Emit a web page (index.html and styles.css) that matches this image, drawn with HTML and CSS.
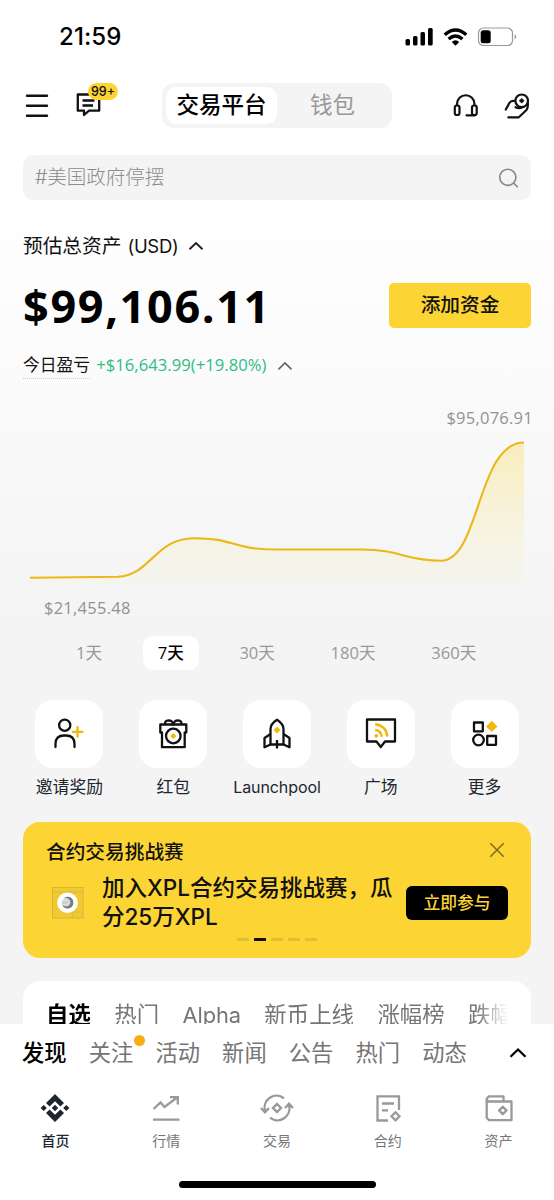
FILE: index.html
```html
<!DOCTYPE html>
<html lang="zh-CN">
<head>
<meta charset="utf-8">
<title>首页</title>
<link rel="stylesheet" href="styles.css">
</head>
<body>
<div class="phone">
  <main class="content">
    <div class="status">
      <span class="time">21:59</span>
      <svg class="status-icons" width="114" height="22" viewBox="404 26 114 22">
        <g fill="#000"><rect x="405.500" y="39" width="4.500" height="6.500" rx="1.500"/><rect x="413" y="36" width="4.500" height="9.500" rx="1.500"/><rect x="420.500" y="32" width="4.500" height="13.500" rx="1.500"/><rect x="428" y="28" width="4.700" height="17.500" rx="1.500"/></g>
        <g fill="none" stroke="#000" stroke-width="3.300"><path d="M444.700 34.800Q455.500 25.300 466.300 34.800"/><path d="M448.600 39Q455.500 33 462.400 39"/></g>
        <path d="M451.800 42Q455.500 38.600 459.200 42L455.500 45.700Z"/>
        <rect x="478.500" y="28" width="34" height="17.500" rx="5" fill="none" stroke="#999" stroke-width="1.200"/>
        <rect x="480.700" y="30.200" width="10" height="13" rx="2.500"/>
        <path d="M514.600 34.200q3.400 2.700 0 5.400z" fill="#999"/>
      </svg>
    </div>

    <header class="header">
      <svg class="menu-icon" width="24" height="26" viewBox="25 92.500 24 26"><path d="M27 95.300H47M27 105.300H47M27 115.300H47" stroke="#111" stroke-width="2.400" stroke-linecap="round"/></svg>
      <div class="messages">
        <svg width="28" height="28" viewBox="73.500 92 28 28" fill="none" stroke="#111" stroke-width="2.300" stroke-linejoin="round"><path d="M77.300 94.500H98.700V110.700H88.500L83.500 115V110.700H77.300Z"/><path d="M82 100.500H94M82 105.500H92.500"/></svg>
        <span class="badge">99+</span>
      </div>
      <div class="switch"><span class="switch-on">交易平台</span><span class="switch-off">钱包</span></div>
      <svg class="headset" width="28" height="28" viewBox="452 91.500 28 28" fill="none" stroke="#111" stroke-width="2.200" stroke-linejoin="round"><path d="M457 105V103.500A8.700 8.700 0 0 1 474.500 103.500V105"/><rect x="454.800" y="105" width="4.700" height="9.500" rx="2"/><rect x="472" y="105" width="4.700" height="9.500" rx="2"/><path d="M475 114.800H466.500" stroke-linecap="round"/></svg>
      <svg class="hand" width="30" height="30" viewBox="502 90.500 30 30" fill="none" stroke="#111" stroke-width="2.200" stroke-linecap="round" stroke-linejoin="round"><circle cx="521.700" cy="100.300" r="6.300"/><path d="M505.800 109L509.500 102.300Q510.700 100.300 513 100.300H514.500M508.300 116.800H518.800L526.500 109.500Q528.300 107.500 527.800 102M515.500 106.700Q519.500 108.500 522.500 106.500"/><path d="M521.700 97.500l2.800 2.800-2.800 2.800-2.800-2.800z" fill="#111" stroke="none"/></svg>
    </header>

    <div class="search">
      <span>#美国政府停摆</span>
      <svg width="24" height="24" viewBox="496 165.500 24 24" fill="none" stroke="#888" stroke-width="1.600"><circle cx="507.800" cy="176.800" r="8.100"/><path d="M513.500 182.500L517.800 186.800"/></svg>
    </div>

    <section class="assets">
      <div class="asset-label"><span>预估总资产</span><span class="usd">(USD)</span><svg width="16" height="10" viewBox="0 0 16 10" fill="none" stroke="#222" stroke-width="1.900"><path d="M1.500 8.300L8 2L14.500 8.300"/></svg></div>
      <div class="balance-row"><span class="balance">$99,106.11</span><button class="add">添加资金</button></div>
      <div class="pnl"><span class="pnl-label">今日盈亏</span><span class="gain">+$16,643.99(+19.80%)</span><svg width="16" height="10" viewBox="0 0 16 10" fill="none" stroke="#666" stroke-width="1.700"><path d="M1.500 8.300L8 2L14.500 8.300"/></svg></div>
    </section>

    <section class="chart">
      <div class="high">$95,076.91</div>
      <svg width="554" height="166" viewBox="0 430 554 166">
        <defs><linearGradient id="area" x1="0" y1="442" x2="0" y2="586" gradientUnits="userSpaceOnUse"><stop offset="0" stop-color="#f8cf32" stop-opacity=".3"/><stop offset="1" stop-color="#f8e85a" stop-opacity=".03"/></linearGradient></defs>
        <path d="M30 577.700L118 576.700C151 575 155 538.200 194 538.200C236 538.200 230 549.500 277 549.500H362C400 549.500 405 560.700 441 560.700C480 560.700 477 442.500 524 442.500V586H30Z" fill="url(#area)"/>
        <path d="M30 577.700L118 576.700C151 575 155 538.200 194 538.200C236 538.200 230 549.500 277 549.500H362C400 549.500 405 560.700 441 560.700C480 560.700 477 442.500 524 442.500" fill="none" stroke="#ecb719" stroke-width="2.100"/>
      </svg>
      <div class="low">$21,455.48</div>
      <div class="ranges"><span>1天</span><span class="current">7天</span><span>30天</span><span>180天</span><span>360天</span></div>
    </section>

    <section class="shortcuts">
      <div class="shortcut"><div class="tile"><svg width="36" height="36" viewBox="52 716 36 36" fill="none" stroke="#111" stroke-width="2.300" stroke-linecap="round"><circle cx="65.700" cy="725.200" r="5.600"/><path d="M56.500 747V744Q56.500 735.500 65 735.500H67Q75.500 735.500 75.500 744V747"/><path d="M73.800 731.800H83.500M78.500 727V736.700" stroke="#f0b90b"/></svg></div><span>邀请奖励</span></div>
      <div class="shortcut"><div class="tile"><svg width="36" height="36" viewBox="155 716 36 36" fill="none" stroke="#111" stroke-width="2.300" stroke-linejoin="round"><path d="M160.300 724.500H186.300V732.500H184.700V747.200H162V732.500H160.300Z"/><path d="M165 724.500Q164.500 720.500 168.500 720.300Q172.500 720.300 173.300 724.500Q174.100 720.300 178 720.300Q182 720.500 181.500 724.500"/><circle cx="173.300" cy="736" r="7.300"/><path d="M173.300 733l3 3-3 3-3-3z" fill="#f0b90b" stroke="none"/></svg></div><span>红包</span></div>
      <div class="shortcut"><div class="tile"><svg width="36" height="36" viewBox="259 716 36 36" fill="none" stroke="#111" stroke-width="2.300" stroke-linejoin="round"><path d="M270.500 744.500V729Q270.500 724 277 719.700Q283.500 724 283.500 729V744.500Z"/><path d="M270.500 734L264.500 738V747.300L270.500 744.500M283.500 734L289.500 738V747.300L283.500 744.500M277 740V748.500"/><path d="M277 726.500l3.500 3.500-3.500 3.500-3.500-3.500z" fill="#f0b90b" stroke="none"/></svg></div><span class="latin">Launchpool</span></div>
      <div class="shortcut"><div class="tile"><svg width="36" height="36" viewBox="363 716 36 36" fill="none" stroke="#111" stroke-width="2.300" stroke-linejoin="round"><path d="M367 719.500H395V741.500H385L380.800 747L376.500 741.500H367Z"/><g stroke="#f0b90b" stroke-width="2.400"><path d="M375.200 724.300Q386.500 725.800 387.300 736.700M375.200 730Q381 730.700 381.900 736.700"/></g><circle cx="376.300" cy="735.800" r="1.900" fill="#f0b90b" stroke="none"/></svg></div><span>广场</span></div>
      <div class="shortcut"><div class="tile"><svg width="36" height="36" viewBox="466.500 716 36 36" fill="none" stroke="#111" stroke-width="2.300" stroke-linejoin="round"><rect x="473.500" y="722.500" width="8.800" height="8.800"/><circle cx="478" cy="740" r="5.300"/><rect x="486.700" y="736" width="8.800" height="8.800"/><path d="M491.300 720.700l5.700 5.700-5.700 5.700-5.700-5.700z" fill="#f0b90b" stroke="none"/></svg></div><span>更多</span></div>
    </section>

    <section class="banner">
      <div class="banner-head"><span>合约交易挑战赛</span><svg width="16" height="16" viewBox="0 0 16 16"><path d="M1.300 1.300L14.700 14.700M14.700 1.300L1.300 14.700" stroke="#80691b" stroke-width="1.500"/></svg></div>
      <div class="banner-main">
        <svg class="coin" width="32" height="32" viewBox="0 0 32 32"><rect x=".5" y=".5" width="30.500" height="30.500" fill="#efca36" stroke="#d9b62e"/><path d="M1 5H31M20.500 22V31M20.500 25H31" stroke="#dcb82d" stroke-width=".8"/><circle cx="15.500" cy="15.700" r="10.300" fill="#fff"/><circle cx="15.500" cy="15.700" r="5.700" fill="#ccd1d2"/><path d="M12 10.900A5.900 5.900 0 1 1 10.300 18.300Q14 20.500 17 18.500Q20 15.500 17 12Q15 10.300 12 10.900Z" fill="#747c82"/><path d="M10.500 13.500Q16 12 17 15.500Q16 19 11.500 17.500" stroke="#fff" fill="none" stroke-dasharray="1 .7"/></svg>
        <p>加入XPL合约交易挑战赛，瓜<br>分25万XPL</p>
        <button class="join">立即参与</button>
      </div>
      <div class="pager"><i></i><i class="active"></i><i></i><i></i><i></i></div>
    </section>

    <section class="market"><div class="market-tabs"><b>自选</b><span>热门</span><span class="alpha">Alpha</span><span>新币上线</span><span>涨幅榜</span><span>跌幅榜</span></div></section>
  </main>

  <footer class="dock">
    <div class="feed"><b>发现</b><span class="notice">关注</span><span>活动</span><span>新闻</span><span>公告</span><span>热门</span><span>动态</span><svg width="18" height="12" viewBox="0 0 18 12" fill="none" stroke="#000" stroke-width="2.300"><path d="M1.500 9.800L9 2.500L16.500 9.800"/></svg></div>
    <nav class="nav">
      <div class="nav-item on"><svg width="30" height="30" viewBox="-15 -15 30 30" fill="#202630"><path d="M0-14L9-5L5.400-1.400L0-6.700L-5.400-1.400L-9-5ZM0 14L9 5L5.400 1.400L0 6.700L-5.400 1.400L-9 5ZM0-3.200L3.200 0L0 3.200L-3.200 0ZM-11.300-3.100L-8.200 0L-11.300 3.100L-14.400 0ZM11.300-3.100L14.400 0L11.300 3.100L8.200 0Z"/></svg><span>首页</span></div>
      <div class="nav-item"><svg width="30" height="30" viewBox="-15 -15 30 30" fill="none" stroke="#999" stroke-width="2.300"><path d="M-13 11.700H13.500M-12.500 1L-5.500-5.500L-1.500-1L11-10.500M4-10.800H11.800V-3.500"/></svg><span>行情</span></div>
      <div class="nav-item"><svg width="34" height="30" viewBox="-17 -15 34 30" fill="none" stroke="#999" stroke-width="2.300"><path d="M7-9.700A12 12 0 0 0-12 3M-16 0L-12 4.300L-8 0M-7 9.700A12 12 0 0 0 12-3M8 0L12-4.300L16 0M0-4L4 0L0 4L-4 0Z"/></svg><span>交易</span></div>
      <div class="nav-item"><svg width="30" height="30" viewBox="-15 -15 30 30" fill="none" stroke="#999" stroke-width="2.300"><path d="M11 2V-11.700H-10.500V12.500H0M-6-4.500H6M-6 2.300H0M7.500 4.300L11.500 8.300L7.500 12.300L3.500 8.300Z"/></svg><span>合约</span></div>
      <div class="nav-item"><svg width="30" height="30" viewBox="-15 -15 30 30" fill="none" stroke="#999" stroke-width="2.300" stroke-linejoin="round"><path d="M4.500-7V-11.700H-10L-12.300-9.500V9.800L-10 12.200H12.500V-6.500H-10.500L-12.300-8M3.800-1.300L7.500 2.400L3.800 6.100L.1 2.400Z"/></svg><span>资产</span></div>
    </nav>
    <div class="home-bar"></div>
  </footer>
</div>
</body>
</html>
```
FILE: styles.css
```css
* { box-sizing: border-box; }
body { margin: 0; font-family: Inter, "Noto Sans CJK SC", sans-serif; color: #111; }
svg { display: block; flex: none; }
button { border: 0; padding: 0; font-family: inherit; }
.phone { width: 554px; height: 1200px; overflow: hidden; display: flex; flex-direction: column; }
.content { height: 1024px; flex: none; overflow: hidden; background: linear-gradient(#fff 200px, #fafafa 400px, #f4f4f4 620px); }
.status { height: 83px; padding: 26px 36px 0 59px; display: flex; justify-content: space-between; }
.time { font-size: 24px; font-weight: 500; line-height: 22px; letter-spacing: .1px; color: #000; }
.header { height: 45px; display: flex; align-items: center; padding-left: 25px; }
.messages { position: relative; margin-left: 25px; }
.badge { position: absolute; left: 14px; top: -9px; width: 30px; height: 17px; border-radius: 9px; background: #fcd535; font-size: 12.500px; line-height: 17px; text-align: center; font-weight: 500; }
.switch { width: 230px; height: 45px; margin-left: 60px; padding: 4px; display: flex; background: #f4f4f4; border-radius: 12px; font-size: 22.500px; line-height: 36px; text-align: center; }
.switch-on { width: 111px; height: 37px; background: #fff; border-radius: 10px; font-weight: 500; color: #000; }
.switch-off { width: 111px; color: #999; }
.headset { margin-left: 60px; }
.hand { margin-left: 22px; }
.search { margin: 27px 23px 0; height: 45px; padding: 0 11px 0 12px; border-radius: 10px; background: #f4f4f4; display: flex; align-items: center; justify-content: space-between; color: #8c8c8c; font-size: 19.500px; line-height: 45px; font-weight: 300; }
.assets { padding: 32px 23px 0; height: 190px; }
.asset-label { height: 28px; display: flex; align-items: center; font-size: 19.700px; line-height: 28px; }
.usd { margin: 0 10px 0 6px; font-size: 18.500px; letter-spacing: -.3px; }
.balance-row { height: 45px; margin-top: 23px; display: flex; align-items: center; justify-content: space-between; }
.balance { font-family: "Open Sans", sans-serif; font-size: 45px; font-weight: 700; letter-spacing: 1.650px; line-height: 45px; color: #000; }
.add { width: 142px; height: 45px; background: #fcd535; border-radius: 5px; font-size: 19.700px; font-weight: 500; line-height: 45px; color: #111; }
.pnl { margin-top: 25px; display: flex; align-items: center; height: 26px; font-size: 16.800px; }
.pnl-label { height: 26px; line-height: 24px; border-bottom: 1px dotted #ccc; }
.gain { margin: 0 10px 0 6px; width: 171px; font-family: "Open Sans", sans-serif; font-size: 16.600px; line-height: 24px; padding-bottom: 2px; white-space: nowrap; color: #2ebd85; letter-spacing: .05px; }
.chart { height: 280px; padding-top: 17px; }
.high, .low { font-family: "Open Sans", sans-serif; font-size: 16.500px; height: 21px; line-height: 21px; color: #929292; letter-spacing: .25px; }
.high { text-align: right; padding-right: 21px; }
.chart > svg { margin-top: 2px; }
.low { padding-left: 44px; margin-top: 1px; }
.ranges { margin: 18px 0 0 61px; display: flex; gap: 25.600px; color: #999; font-family: "Open Sans", "Noto Sans CJK SC", sans-serif; font-size: 16.600px; line-height: 34px; }
.ranges span { padding: 0 15px; border-radius: 10px; }
.ranges .current { background: #fff; color: #000; font-weight: 500; }
.shortcuts { margin: 30px 17.500px 0; display: grid; grid-template-columns: repeat(5, 1fr); }
.shortcut { display: flex; flex-direction: column; align-items: center; font-size: 16.800px; line-height: 26px; color: #202630; }
.shortcut span { margin-top: 6px; }
.shortcut .latin { font-size: 16px; letter-spacing: -.1px; }
.tile { width: 68px; height: 68px; background: #fff; border-radius: 18px; display: flex; align-items: center; justify-content: center; }
.banner { margin: 22px 23px 0; height: 136px; padding: 15px 23px 0; background: #fcd535; border-radius: 17px; }
.banner-head { display: flex; justify-content: space-between; align-items: center; height: 26px; padding-right: 3px; font-size: 19.700px; font-weight: 500; }
.banner-main { height: 60px; margin-top: 10px; display: flex; align-items: center; }
.coin { margin-left: 6px; }
.banner p { width: 303px; margin: -2px 0 0 18px; font-size: 22.500px; line-height: 29.500px; font-weight: 500; white-space: nowrap; }
.join { width: 102px; height: 34px; flex: none; border-radius: 6px; background: #000; color: #fcd535; font-size: 16.800px; line-height: 34px; font-weight: 500; margin-left: 1px; }
.pager { display: flex; justify-content: center; gap: 5px; margin-top: 5px; }
.pager i { width: 12px; height: 3px; background: #e4bf2f; }
.pager .active { background: #111; }
.market { margin: 23px 23px 0; height: 65px; padding: 18px 23px 0; background: #fff; border-radius: 18px; }
.market-tabs { display: flex; gap: 23.500px; overflow: hidden; white-space: nowrap; font-size: 22.400px; line-height: 32px; color: #757575; mask-image: linear-gradient(90deg, #000 430px, transparent 462px); }
.market-tabs span, .market-tabs b { flex: none; }
.market-tabs b { color: #000; font-weight: 700; }
.market-tabs .alpha { font-size: 21.800px; letter-spacing: -.1px; }
.dock { height: 176px; flex: none; background: #fff; }
.feed { height: 58px; display: flex; align-items: center; padding: 0 27px 0 22px; gap: 22.100px; font-size: 22.300px; line-height: 32px; color: #757575; }
.feed b { color: #000; font-weight: 500; }
.feed svg { margin-left: auto; }
.notice { position: relative; }
.notice::after { content: ""; position: absolute; width: 11px; height: 11px; border-radius: 50%; background: #f8ad10; left: 45px; top: -2px; }
.nav { display: grid; grid-template-columns: repeat(5, 1fr); padding-top: 11px; height: 99px; }
.nav-item { display: flex; flex-direction: column; align-items: center; font-size: 14px; line-height: 22px; color: #757575; }
.nav-item span { margin-top: 7px; }
.nav-item.on { color: #202630; font-weight: 500; }
.home-bar { width: 197px; height: 7px; border-radius: 4px; margin: 0 auto; background: #000; }
```
